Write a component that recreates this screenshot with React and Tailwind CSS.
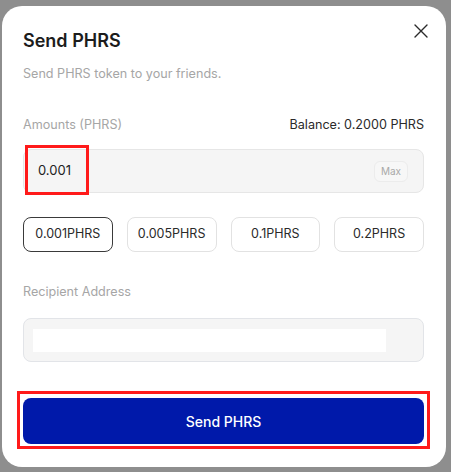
export default function App() {
  const presets = ["0.001PHRS", "0.005PHRS", "0.1PHRS", "0.2PHRS"];
  return (
    <div className="w-[451px] h-[472px] bg-[#8e8e8e] overflow-hidden" style={{ fontFamily: "Inter, 'Noto Sans', sans-serif" }}>
      <div className="relative ml-[2px] mt-[6px] w-[444px] h-[461px] bg-white rounded-[20px] pl-[21px] pr-[22px] pt-[21px]">
        <button className="absolute right-[17px] top-[17px] w-[16px] h-[16px] flex items-center justify-center text-[#2a2a2a]">
          <svg width="16" height="16" viewBox="0 0 16 16" fill="none" stroke="currentColor" strokeWidth="1.4" strokeLinecap="round">
            <path d="M2 2 L14 14 M14 2 L2 14" />
          </svg>
        </button>
        <div className="text-[18px] leading-[28px] font-semibold text-[#1c1c1c]">Send PHRS</div>
        <div className="mt-[9px] text-[12.6px] leading-[20px] text-[#a6a6a6]">Send PHRS token to your friends.</div>
        <div className="mt-[31px] flex justify-between items-center text-[12.6px] leading-[20px]">
          <span className="text-[#a6a6a6]">Amounts (PHRS)</span>
          <span className="text-[#2a2a2a]">Balance: 0.2000 PHRS</span>
        </div>
        <div className="relative mt-[14px] h-[44px] rounded-[8px] bg-[#f5f5f5] border border-[#e6e6e6] flex items-center justify-between pl-[14px] pr-[15px]">
          <span className="text-[13px] text-[#222]">0.001</span>
          <span className="h-[21px] px-[6px] rounded-[6px] border border-[#ececec] bg-[#f7f7f7] text-[10px] leading-[19px] text-[#a8a8a8]">Max</span>
          <div className="absolute left-[1px] top-[-5px] w-[64px] h-[50px] border-[3px] border-[#ff1a1a]" />
        </div>
        <div className="mt-[24px] grid grid-cols-4 gap-[14px]">
          {presets.map((p, i) => (
            <div
              key={p}
              className={
                "h-[35px] rounded-[8px] flex items-center justify-center text-[12.5px] text-[#2a2a2a] bg-white border " +
                (i === 0 ? "border-[#3a3a3a]" : "border-[#e2e2e2]")
              }
            >
              {p}
            </div>
          ))}
        </div>
        <div className="mt-[30px] text-[12.6px] leading-[20px] text-[#a6a6a6]">Recipient Address</div>
        <div className="mt-[16px] h-[44px] rounded-[8px] bg-[#f5f5f5] border border-[#e2e4e8] flex items-center pl-[9px]">
          <div className="w-[353px] h-[23px] bg-white" />
        </div>
        <div className="relative mt-[36px]">
          <div className="absolute left-[-6px] right-[-6px] top-[-7px] bottom-[-5px] border-[3px] border-[#ff1a1a]" />
          <button className="relative w-full h-[46px] rounded-[8px] bg-[#0019aa] text-white text-[14px] font-medium flex items-center justify-center">
            Send PHRS
          </button>
        </div>
      </div>
    </div>
  );
}
